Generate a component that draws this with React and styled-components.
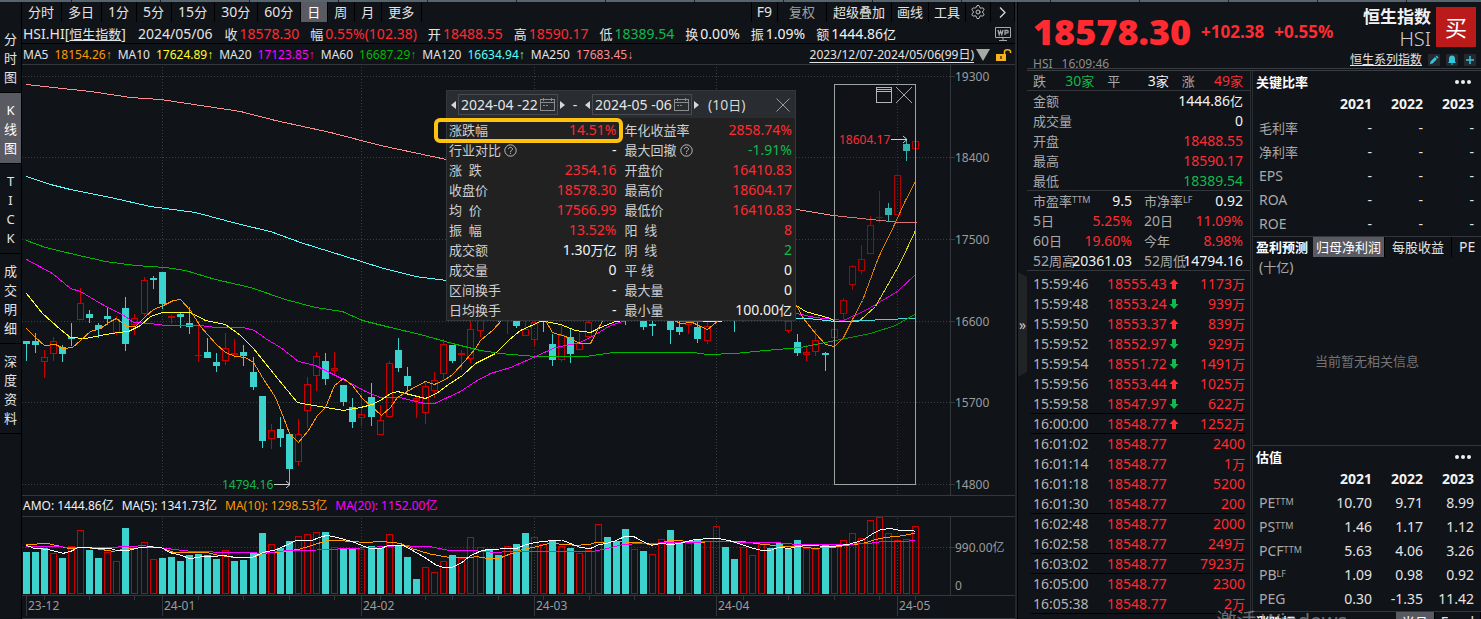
import React from 'react'
import styled, { css, createGlobalStyle } from 'styled-components'
import { Settings } from 'lucide-react'

const colors = {
  bg: '#101318',
  line: '#33363a',
  black: '#000',
  text: '#e4e4e4',
  muted: '#a9a9a9',
  up: '#ff2b31',
  down: '#12b84d',
  active: '#5a5a63',
  teal: '#3cd3cf',
  candle: '#cc0000',
}
const tones = {
  up: colors.up,
  down: colors.down,
  plain: '#f2f2f2',
}

const GlobalStyle = createGlobalStyle`
  * { box-sizing: border-box; }
  body {
    margin: 0;
    overflow: hidden;
    background: ${colors.bg};
    color: ${colors.text};
    font: 14px/20px "Noto Sans", "Noto Sans CJK SC", sans-serif;
  }
  button, input {
    margin: 0;
    padding: 0;
    border: 0;
    background: none;
    color: inherit;
    font: inherit;
  }
  table { border-collapse: collapse; border-spacing: 0; }
  th, td { padding: 0; font-weight: 400; text-align: left; }
  dl, dd, dt { margin: 0; }
  a { color: inherit; }
`

// chinese runs are set one size smaller than the digits beside them
const Cjk = styled.span`
  font-size: 13px;
`
const Mixed = ({ children }) =>
  children.split(/([\u4e00-\u9fff]+)/).filter(Boolean).map((part, i) => (
    /[\u4e00-\u9fff]/.test(part) ? <Cjk key={i}>{part}</Cjk> : <React.Fragment key={i}>{part}</React.Fragment>
  ))

/* ---------- shell ---------- */

const Page = styled.div`
  position: relative;
  display: flex;
  flex-direction: column;
  height: 100vh;
  overflow: hidden;
`
const TopStrip = styled.div`
  flex: none;
  height: 2px;
  background: repeating-linear-gradient(90deg, #56646d 0 88px, #1d2226 88px 89px) -17px 0;
`
const Body = styled.div`
  flex: 1;
  display: flex;
  min-height: 0;
`
const Rail = styled.nav`
  flex: none;
  width: 22px;
  padding-top: 20px;
  border-right: 1px solid ${colors.black};
`
const RailButton = styled.button`
  display: block;
  width: 100%;
  padding: 8px 0 5px;
  border-bottom: 1px solid ${colors.black};
  background: ${({ $active }) => ($active ? colors.active : 'none')};
  color: ${({ $active }) => ($active ? '#fff' : colors.text)};
  font-size: 13px;
  line-height: 19px;

  span { display: block; }
`
const Main = styled.main`
  flex: 1;
  min-width: 0;
  display: flex;
  flex-direction: column;
`

/* ---------- toolbar ---------- */

const Toolbar = styled.div`
  flex: none;
  display: flex;
  height: 20px;
`
const ToolButton = styled.button`
  display: flex;
  align-items: center;
  padding: 0 ${({ $pad = 6 }) => $pad}px;
  border-right: 1px solid ${colors.black};
  line-height: 20px;
  white-space: nowrap;
  color: ${({ $dim }) => ($dim ? '#a0a0a0' : colors.text)};
  ${({ $active }) => $active && css`
    background: ${colors.active};
    color: #fff;
  `}

  svg { flex: none; }
`
const Periods = styled.div`
  display: flex;

  ${ToolButton} { padding-right: 7px; }
`
const Tools = styled.div`
  display: flex;
  margin-left: auto;
  border-left: 1px solid ${colors.black};
`

/* ---------- info rows ---------- */

const QuoteRow = styled.div`
  flex: none;
  display: flex;
  align-items: center;
  gap: 12px;
  height: 22px;
  padding: 3px 3px 0 1px;
  border-bottom: 1px solid ${colors.black};
  white-space: nowrap;

  svg { margin-left: auto; }
`
const QuoteList = styled.dl`
  display: flex;
  gap: 11px;
`
const QuoteItem = styled.div`
  display: flex;
  align-items: center;
  gap: 2px;

  dt { font-size: 13px; }
  dd { color: ${({ $tone = 'plain' }) => tones[$tone]}; }
`
const SymbolLink = styled.a`
  text-decoration: none;

  span { text-decoration: underline; }
`
const MaRow = styled.div`
  flex: none;
  display: flex;
  align-items: center;
  gap: 6px;
  height: 21px;
  padding: 2px 3px 0 1px;
  border-bottom: 1px solid ${colors.line};
  font-size: 12px;
  white-space: nowrap;
`
const MaItem = styled.span`
  display: flex;
  gap: 6px;
  color: ${({ $color }) => $color};
  b { font-weight: 400; color: ${colors.text}; }
  i { font-style: normal; font-family: "Liberation Sans", sans-serif; }
`
const RangeButton = styled.button`
  display: flex;
  align-items: center;
  gap: 2px;
  margin-left: auto;
  span { text-decoration: underline; text-underline-offset: 3px; }
`
const AmoRow = styled.div`
  flex: none;
  display: flex;
  gap: 8px;
  height: 22px;
  padding-left: 1px;
  border-top: 1px solid ${colors.line};
  border-bottom: 1px solid ${colors.line};
  font-size: 12px;
  line-height: 20px;
  white-space: nowrap;
`
const AmoItem = styled.span`
  color: ${({ $color }) => $color};
`

/* ---------- charts ---------- */

const ChartBox = styled.section`
  position: relative;
  flex: none;
`
const Chart = styled.svg`
  display: block;
  width: 100%;
  height: auto;
  overflow: hidden;
  font: 12px "Noto Sans", "Noto Sans CJK SC", sans-serif;

  text { fill: #9a9c9e; }
`

// [high, body top, body bottom, low, rising] in thirds of a pixel, counted from y = 250
const candles = [
  [273, 273, 282, 333, 0], [249, 273, 285, 308, 0], [300, 321, 336, 384, 1], [261, 273, 312, 333, 1],
  [285, 291, 312, 336, 0], [219, 261, 267, 288, 0], [114, 159, 210, 210, 1], [180, 192, 204, 219, 0],
  [219, 225, 237, 264, 0], [171, 198, 207, 225, 0], [198, 207, 249, 255, 1], [141, 174, 282, 303, 0],
  [192, 204, 225, 255, 1], [81, 90, 192, 198, 1], [78, 84, 90, 117, 0], [66, 66, 162, 177, 0],
  [195, 198, 204, 222, 1], [189, 192, 201, 234, 0], [171, 219, 231, 252, 0], [213, 315, 318, 336, 1],
  [264, 306, 324, 324, 0], [309, 336, 348, 366, 0], [249, 294, 333, 345, 1], [267, 309, 315, 324, 1],
  [285, 306, 318, 348, 0], [321, 366, 411, 420, 0], [438, 438, 573, 594, 0], [522, 540, 567, 597, 1],
  [501, 537, 564, 591, 0], [549, 552, 657, 705, 0], [507, 552, 636, 648, 1], [381, 402, 483, 534, 1],
  [306, 318, 378, 423, 1], [309, 333, 387, 405, 0], [306, 354, 363, 378, 1], [405, 405, 456, 468, 0],
  [444, 471, 516, 534, 0], [429, 492, 503, 528, 1], [399, 441, 501, 528, 0], [465, 510, 555, 555, 1],
  [333, 339, 501, 501, 1], [264, 300, 354, 366, 0], [351, 378, 408, 423, 0], [435, 444, 453, 504, 1],
  [399, 408, 489, 522, 1], [366, 390, 423, 444, 1], [267, 282, 372, 387, 1], [285, 285, 333, 339, 0],
  [300, 309, 315, 360, 1], [198, 237, 327, 339, 1], [190, 200, 243, 261, 1], [120, 140, 180, 200, 0],
  [150, 160, 190, 216, 0], [150, 160, 190, 252, 1], [170, 180, 228, 234, 0], [198, 237, 258, 258, 1],
  [198, 216, 270, 288, 1], [180, 190, 216, 246, 0], [252, 282, 330, 348, 0], [228, 255, 330, 336, 1],
  [234, 261, 312, 339, 0], [249, 279, 300, 300, 1], [210, 216, 261, 261, 1], [150, 160, 190, 200, 1],
  [140, 150, 180, 190, 0], [140, 150, 180, 190, 0], [150, 160, 190, 224, 0], [150, 160, 190, 200, 1],
  [180, 190, 231, 240, 0], [204, 222, 228, 258, 0], [150, 160, 190, 200, 1], [180, 190, 240, 282, 0],
  [204, 231, 246, 255, 0], [198, 204, 225, 252, 1], [207, 231, 267, 279, 0], [213, 228, 273, 282, 1],
  [150, 160, 190, 200, 1], [150, 160, 190, 200, 0], [150, 160, 190, 246, 0], [150, 160, 190, 216, 1],
  [150, 160, 190, 200, 1], [150, 160, 190, 200, 0], [150, 160, 190, 200, 0], [150, 160, 190, 200, 0],
  [201, 213, 243, 249, 1], [252, 276, 309, 318, 0], [285, 306, 315, 333, 1], [237, 270, 306, 318, 1],
  [306, 309, 315, 363, 0], [237, 237, 264, 273, 1], [144, 150, 192, 207, 1], [45, 48, 105, 120, 1],
  [-15, 27, 63, 72, 1], [-102, -75, 12, 12, 1], [-177, -99, -96, -81, 1], [-141, -126, -105, -85, 0],
  [-228, -225, -105, -105, 1], [-330, -318, -297, -267, 0], [-327, -327, -303, -303, 1],
]

const averages = [
  ['#ff8c8c', '26,84 53,87 90,91 130,97 160,99 200,105 240,111 275,120 330,132 380,145 446,159 620,186 796,209 833,215 870,219 900,222 916,222'],
  ['#55ffff', '26,176 50,184 70,189 110,197 150,206 195,212 240,224 270,231 300,242 345,256 380,267 415,276 446,280 620,305 796,318 808,318 835,321 870,320 880,319 916,318'],
  ['#00b800', '26,240 45,247 70,253 105,261 135,265 165,267 185,270 215,279 250,287 285,299 315,307 342,311 362,320 390,327 420,334 452,343 480,350 500,353 535,356 585,356 613,352 693,352 707,354 735,353 765,350 800,347 835,340 870,333 895,325 916,313'],
  ['#ff00ff', '26,259 52,273 70,288 80,291 100,303 125,316 133,322 150,323 165,325 200,325 215,327 243,327 254,330 265,338 280,347 298,361 315,365 345,380 365,391 380,397 400,397 415,401 425,403 434,403 460,391 475,381 490,373 510,367 533,357 555,347 565,345 577,343 590,337 610,325 622,321 640,317 685,321 713,321 760,300 796,313 815,317 843,320 865,310 880,301 897,291 915,274'],
  ['#ffff20', '26,293 42,313 60,329 70,337 85,338 100,335 117,332 128,331 140,325 150,316 162,312 190,312 205,320 225,324 240,335 253,348 265,363 282,384 297,402 307,404 325,407 343,410 360,407 372,404 383,398 390,393 397,391 413,395 425,398 436,393 448,384 462,375 475,363 495,353 508,340 520,330 540,321 545,321 560,324 575,330 590,332 600,327 615,321 640,318 715,321 728,320 760,290 796,305 805,311 830,318 835,321 858,321 865,315 875,306 887,285 900,262 915,230'],
  ['#ff9900', '26,328 35,337 44,345 55,344 63,348 72,347 80,340 90,331 100,328 110,321 116,318 126,326 135,326 145,316 153,309 163,305 173,300 180,299 190,310 200,326 215,343 225,352 235,356 245,357 253,362 262,377 275,397 283,417 289,433 298,442 308,430 317,415 325,407 334,385 343,378 352,385 362,398 372,407 381,415 390,407 397,397 410,389 425,381 434,384 445,379 452,374 465,360 475,348 480,340 492,330 502,319 515,300 533,320 545,320 552,332 565,336 580,343 590,343 600,324 605,316 640,290 670,318 680,323 692,322 700,326 707,329 718,320 760,280 796,305 803,318 815,333 825,344 834,346 843,337 852,319 862,300 878,257 895,222 905,200 915,181'],
]

// [bar top, rising] in thirds of a pixel, counted from y = 490
const volumes = [
  [186, 0], [186, 0], [174, 0], [189, 1], [204, 0], [168, 1], [120, 1], [180, 0], [204, 0], [186, 1],
  [213, 1], [114, 0], [174, 1], [156, 1], [207, 1], [204, 0], [201, 0], [213, 0], [195, 0], [192, 0],
  [195, 0], [207, 0], [180, 1], [213, 0], [210, 0], [189, 0], [129, 0], [162, 1], [174, 0], [153, 0],
  [138, 1], [132, 1], [126, 1], [126, 0], [171, 1], [174, 0], [177, 0], [177, 1], [168, 0], [174, 0],
  [132, 1], [168, 0], [201, 0], [267, 0], [231, 1], [246, 1], [213, 1], [195, 0], [204, 1], [141, 1],
  [171, 1], [177, 0], [195, 0], [168, 1], [162, 0], [129, 0], [141, 1], [162, 1], [150, 0], [168, 1],
  [174, 0], [189, 1], [180, 1], [102, 1], [141, 0], [153, 0], [117, 0], [177, 1], [183, 0], [192, 1],
  [147, 1], [120, 0], [156, 0], [159, 1], [147, 0], [153, 1], [108, 1], [171, 0], [207, 0], [171, 1],
  [195, 1], [162, 1], [174, 0], [159, 0], [177, 0], [150, 0], [174, 1], [177, 1], [165, 0], [165, 1],
  [150, 1], [129, 1], [144, 1], [90, 1], [81, 1], [129, 1], [150, 1], [147, 1], [108, 1],
]

const volumeAverages = [
  ['#ff9900', '79,163 145,161 190,171 215,177 240,171 280,175 340,184 370,178 425,173 487,174 520,187 620,187 650,195 700,202 760,202 790,190 850,185 900,177 940,165 980,152 1020,152 1090,157 1150,155 1200,160 1240,177 1290,192 1340,201 1400,204 1430,200 1460,205 1500,204 1530,192 1570,178 1610,170 1650,160 1730,166 1770,163 1790,157 1840,155 1915,157 1950,164 1980,160 2010,151 2050,153 2100,157 2150,154 2230,155 2280,162 2360,170 2400,170 2440,175 2500,172 2540,166 2590,160 2630,148 2660,142 2700,138 2745,130'],
  ['#ff00ff', '79,169 190,171 330,172 380,170 430,167 487,174 580,185 750,188 790,190 850,183 950,180 1080,174 1200,167 1290,170 1340,180 1400,180 1480,187 1560,184 1780,184 1810,178 1870,163 1950,160 2030,157 2180,155 2260,159 2320,157 2400,164 2540,163 2610,160 2650,154 2700,156 2745,151'],
  ['#ffffff', '79,166 100,174 130,177 150,180 190,190 215,183 235,172 260,172 285,175 325,174 345,180 385,181 415,174 450,170 487,174 510,188 540,195 570,206 600,201 640,200 670,196 700,201 760,201 790,187 830,179 860,165 890,151 930,153 955,144 980,136 1010,142 1060,156 1090,168 1110,175 1145,175 1165,166 1210,166 1230,177 1270,200 1310,226 1330,232 1358,232 1385,218 1410,198 1440,184 1465,178 1500,177 1550,175 1575,165 1600,159 1630,154 1685,150 1710,160 1740,172 1770,176 1795,165 1820,160 1845,153 1875,139 1900,139 1930,155 1955,166 1985,160 2010,164 2040,160 2070,152 2090,148 2150,145 2185,151 2220,162 2260,175 2285,181 2315,180 2340,171 2365,176 2390,170 2415,167 2500,169 2550,162 2590,150 2620,130 2640,120 2670,115 2700,121 2735,121 2745,124'],
]

const months = [[26, '23-12'], [162, '24-01'], [361, '24-02'], [534, '24-03'], [716, '24-04'], [897, '24-05']]
const minorTicks = [44, 89, 134, 198, 243, 289, 334, 380, 425, 452, 498, 543, 589, 634, 679, 743, 788, 834, 879, 915]
const prices = [[76, 19300], [157, 18400], [239, 17500], [321, 16600], [402, 15700], [484, 14800]]

const slotX = i => Math.floor(26.02 + 9.08 * i)
const fromThirds = base => v => Math.round(base + v / 3)

const Candle = ({ index, data: [high, top, bottom, low, rising] }) => {
  const x = slotX(index)
  const [h, t, b, l] = [high, top, bottom, low].map(fromThirds(250))
  if (!rising) {
    return <path fill={colors.teal} d={`M${x} ${h}h1V${l}h-1zM${x - 3} ${t}h7V${b}h-7z`} />
  }
  const hollow = b - t >= 3 ? `M${x - 2} ${t + 1}V${b - 1}h5V${t + 1}z` : ''
  return (
    <g fill={colors.candle}>
      <path d={`M${x} ${h}h1V${t}h-1zM${x} ${b}h1V${l}h-1z`} />
      <path fillRule="evenodd" d={`M${x - 3} ${t}h7V${b}h-7z${hollow}`} />
    </g>
  )
}

const PriceChart = () => (
  <Chart viewBox="22 65 993 430" role="img" aria-label="K线图">
    <g shapeRendering="crispEdges">
      <g stroke="#3b3f43" strokeDasharray="1 2" fill="none">
        {prices.map(([y]) => <path key={y} d={`M22 ${y + 0.5}H950`} />)}
        {months.slice(1).map(([x]) => <path key={x} d={`M${x + 0.5} 67V495`} />)}
      </g>
      <path d="M950.5 65V495" stroke={colors.line} />
      {prices.map(([y]) => <path key={y} d={`M950 ${y + 0.5}h5`} stroke={colors.line} />)}
      {candles.map((data, i) => <Candle key={i} index={i} data={data} />)}
      {averages.map(([color, points]) => (
        <polyline key={color} points={points} transform="translate(0.5 0.5)" fill="none" stroke={color} />
      ))}
      <rect x="834" y="84" width="82" height="401" fill="#101318" opacity="0.18" />
      <rect x="834.5" y="84.5" width="81" height="400" fill="none" stroke="#9da39f" />
      <path d="M876.5 87.5h15v15h-15zM877 91.500h15M877 89.500h14" fill="none" stroke="#b4b4b4" />
    </g>
    <path d="M896 87l16 16M912 87l-16 16" stroke="#a8a8a8" />
    <path d="M891 139.500h16M903 136l4 3.500l-4 3.500M274 484.500h16M286 481l4 3.500l-4 3.500" fill="none" stroke="#d0d0d0" />
    <text x="839" y="144" style={{ fill: colors.up }}>18604.17</text>
    <text x="222" y="489" style={{ fill: colors.down }}>14794.16</text>
    {prices.map(([y, label]) => <text key={y} x="955" y={y + 5}>{label}</text>)}
  </Chart>
)

const VolumeBar = ({ index, data: [top, rising] }) => {
  const x = slotX(index)
  const t = fromThirds(490)(top)
  return rising
    ? <rect x={x - 2.5} y={t + 0.5} width="6" height={593 - t} fill="none" stroke={colors.candle} />
    : <rect x={x - 3} y={t} width="7" height={594 - t} fill={colors.teal} />
}

const toPixels = points => points.split(' ').map(p => {
  const [x, y] = p.split(',').map(Number)
  return `${x / 3},${490 + y / 3}`
}).join(' ')

const VolumeChart = () => (
  <Chart viewBox="22 517 993 102" role="img" aria-label="成交额">
    <g shapeRendering="crispEdges" fill="none">
      <g stroke="#3b3f43" strokeDasharray="1 2">
        <path d="M22 547.500H950" />
        {months.slice(1).map(([x]) => <path key={x} d={`M${x + 0.5} 518V595`} />)}
      </g>
      {volumes.map((data, i) => <VolumeBar key={i} index={i} data={data} />)}
      {volumeAverages.map(([color, points]) => (
        <polyline key={color} points={toPixels(points)} stroke={color} />
      ))}
      <g stroke={colors.line}>
        <path d="M950.500 517V595M950 547.500h5M22 595.500H1015M22 618.500H1015" />
        {months.map(([x]) => <path key={x} d={`M${x + 0.5} 596V616`} />)}
        {minorTicks.map(x => <path key={x} d={`M${x + 0.5} 596v4`} />)}
      </g>
    </g>
    {months.map(([x, label]) => <text key={x} x={x + 2} y="610">{label}</text>)}
    <text x="955" y="552">990.00亿</text>
    <text x="955" y="590">0</text>
  </Chart>
)

/* ---------- range statistics popup ---------- */

const Popup = styled.div`
  position: absolute;
  left: 424px;
  top: 25px;
  width: 350px;
  border: 1px solid #34373b;
  background: #212121;
`
const PopupHeader = styled.div`
  display: flex;
  align-items: center;
  height: 27px;
  padding: 0 5px 0 2px;
  background: #292c30;
`
const StepButton = styled.button`
  flex: none;
  display: flex;
  justify-content: center;
  width: 9px;
`
const DateField = styled.label`
  flex: none;
  display: flex;
  align-items: center;
  width: 100px;
  height: 21px;
  padding: 0 2px;
  border: 1px solid #484b50;

  input { width: 79px; height: 19px; }
  svg { flex: none; }
`
const Dash = styled.span`
  width: 16px;
  text-align: center;
`
const Days = styled.span`
  margin-left: 7px;
  color: #d6d6d6;
`
const CloseButton = styled.button`
  display: flex;
  margin-left: auto;
`
const StatGrid = styled.dl`
  display: grid;
  grid-template-columns: 1fr 1fr;
  column-gap: 8px;
  padding: 2px 3px 0 2px;
`
const Stat = styled.div`
  display: flex;
  align-items: center;
  justify-content: space-between;
  height: 20px;

  dt {
    display: flex;
    align-items: center;
    gap: 3px;
    font-size: 13px;
    color: #cfcfcf;
    white-space: pre;
  }
  dd { color: ${({ $tone = 'plain' }) => tones[$tone]}; }
`
const Highlight = styled.div`
  position: absolute;
  left: -13px;
  top: 27px;
  width: 189px;
  height: 25px;
  border: 4px solid #ffc20e;
  border-radius: 6px;
  pointer-events: none;
`

const Calendar = () => (
  <svg width="15" height="15" viewBox="0 0 15 15" fill="none" stroke="#8c8c8c" shapeRendering="crispEdges">
    <path d="M0.500 2.500h14v11h-14zM0.500 5.500h14M3.500 0.500v3M11.500 0.500v3" />
    <path d="M3 8.500h2M6 8.500h2" />
  </svg>
)
const Help = () => (
  <svg width="13" height="13" viewBox="0 0 13 13" fill="none" stroke="#bdbdbd">
    <circle cx="6.500" cy="6.500" r="5.700" />
    <path d="M4.500 5.200c0-1.200.9-1.900 2-1.900s2 .7 2 1.700c0 1.400-2 1.400-2 2.900M6.500 8.800v1.100" />
  </svg>
)
const Triangle = ({ left }) => (
  <svg width="5" height="8" viewBox="0 0 5 8" fill="#d8d8d8">
    <path d={left ? 'M5 0v8L0 4z' : 'M0 0v8l5-4z'} />
  </svg>
)

const stats = [
  ['涨跌幅', '14.51%', 'up'], ['年化收益率', '2858.74%', 'up'],
  ['行业对比', '-', 'plain', true], ['最大回撤', '-1.91%', 'down', true],
  ['涨  跌', '2354.16', 'up'], ['开盘价', '16410.83', 'up'],
  ['收盘价', '18578.30', 'up'], ['最高价', '18604.17', 'up'],
  ['均  价', '17566.99', 'up'], ['最低价', '16410.83', 'up'],
  ['振  幅', '13.52%', 'up'], ['阳  线', '8', 'up'],
  ['成交额', '1.30万亿'], ['阴  线', '2', 'down'],
  ['成交量', '0'], ['平 线', '0'],
  ['区间换手', '-'], ['最大量', '0'],
  ['日均换手', '-'], ['最小量', '100.00亿'],
]

const RangePopup = () => (
  <Popup>
    <PopupHeader>
      <StepButton aria-label="开始日期前移"><Triangle left /></StepButton>
      <DateField><input aria-label="开始日期" defaultValue="2024-04 -22" /><Calendar /></DateField>
      <StepButton aria-label="开始日期后移"><Triangle /></StepButton>
      <Dash>-</Dash>
      <StepButton aria-label="结束日期前移"><Triangle left /></StepButton>
      <DateField><input aria-label="结束日期" defaultValue="2024-05 -06" /><Calendar /></DateField>
      <StepButton aria-label="结束日期后移"><Triangle /></StepButton>
      <Days><Mixed>(10日)</Mixed></Days>
      <CloseButton aria-label="关闭">
        <svg width="14" height="14" viewBox="0 0 14 14" stroke="#9a9a9a"><path d="M0.500 0.500l13 13M13.500 0.500l-13 13" /></svg>
      </CloseButton>
    </PopupHeader>
    <StatGrid>
      {stats.map(([label, value, tone, help]) => (
        <Stat key={label} $tone={tone}>
          <dt>{label}{help && <Help />}</dt>
          <dd><Mixed>{value}</Mixed></dd>
        </Stat>
      ))}
    </StatGrid>
    <Highlight />
  </Popup>
)

/* ---------- right panel ---------- */

const Side = styled.aside`
  flex: none;
  display: flex;
  width: 466px;
  border-left: 2px solid #24272b;
`
const Gutter = styled.div`
  flex: none;
  width: 10px;
  border-left: 1px solid ${colors.black};
  padding-top: 270px;
`
const ExpandButton = styled.button`
  display: block;
  width: 9px;
  height: 105px;
  background: #222324;
  clip-path: polygon(0 0, 100% 5px, 100% 100px, 0 100%);
  font-size: 14px;
  line-height: 96px;
  color: #c8c8c8;
`
const SideBody = styled.div`
  flex: 1;
  min-width: 0;
  display: flex;
  flex-direction: column;
`
const SideHeader = styled.header`
  flex: none;
  display: flex;
  justify-content: space-between;
  height: 69px;
  padding: 5px 5px 0 6px;
  border-bottom: 3px double #3a3d41;
`
const PriceLine = styled.div`
  display: flex;
  align-items: center;
  gap: 10px;
  height: 48px;
  padding-top: 2px;
  color: ${colors.up};
  font-weight: 700;
  font-size: 17px;
  white-space: nowrap;
`
const Price = styled.strong`
  font-size: 36px;
`
const Updated = styled.div`
  display: flex;
  gap: 9px;
  font-size: 12px;
  line-height: 18px;
  color: #8d8d8d;
`
const NameBlock = styled.div`
  display: flex;
  flex-direction: column;
  align-items: flex-end;
`
const NameRow = styled.div`
  display: flex;
  gap: 5px;
  height: 47px;
  text-align: right;
  white-space: nowrap;
`
const Name = styled.h1`
  margin: 0;
  font-size: 17px;
  font-weight: 700;
  line-height: 20px;
  color: #f2f2f2;

  small {
    display: block;
    font-size: 20px;
    font-weight: 300;
    line-height: 24px;
    color: #cfcfcf;
  }
`
const BuyButton = styled.button`
  width: 40px;
  height: 40px;
  background: #bb1a1a;
  color: #fff;
  font-size: 22px;
`
const SeriesRow = styled.div`
  display: flex;
  align-items: center;
  gap: 6px;
  height: 18px;
  font-size: 12px;
`
const IconButton = styled.button`
  display: flex;
  width: 12px;
  height: 12px;
  background: #25282d;
`
const Columns = styled.div`
  flex: 1;
  display: flex;
  min-height: 0;
`
const Quotes = styled.section`
  flex: none;
  width: 223px;
`
const Block = styled.dl`
  display: grid;
  grid-template-columns: repeat(${({ $cols = 1 }) => $cols}, minmax(0, 1fr));
  column-gap: ${({ $gap = 0 }) => $gap}px;
  padding: 0 7px 0 6px;
  box-shadow: inset 0 -1px ${colors.line};
`
const Pair = styled.div`
  display: flex;
  height: 20px;
  white-space: nowrap;

  dt { flex: 1 1 0; min-width: 0; color: ${colors.muted}; }
  dd { color: ${({ $tone = 'plain' }) => tones[$tone]}; }
  sup { font-size: 9px; line-height: 0; vertical-align: 3px; }
`
const Ticks = styled.table`
  width: 214px;
  margin: 3px 0 0 4px;
  table-layout: fixed;
`
const TickRow = styled.tr`
  height: 20px;
  color: ${colors.up};
  ${({ $rule }) => $rule && css`box-shadow: inset 0 -1px ${colors.black};`}

  th { width: 76px; padding-left: 2px; color: #b4b4b4; }
  td { line-height: 20px; }
  td:nth-child(2) { width: 60px; }
  td:nth-child(3) { width: 14px; }
  td:last-child { text-align: right; }
  svg { display: block; margin: 0 auto; }
`
const Finance = styled.section`
  flex: 1;
  min-width: 0;
  display: flex;
  flex-direction: column;
  border-left: 3px double #2a2d31;
`
const Titled = styled.div`
  flex: none;
  display: flex;
  align-items: center;
  justify-content: space-between;
  height: 21px;
  padding: 0 10px 0 3px;
`
const Title = styled.h2`
  flex: none;
  margin: 0;
  font-size: 13px;
  font-weight: 700;
  color: #fff;
`
const Ratios = styled.table`
  flex: none;
  width: 100%;
  table-layout: fixed;

  tr { height: 24px; }
  th, td { text-align: right; width: 51px; }
  th:first-child { width: auto; padding-left: 6px; text-align: left; color: ${colors.muted}; }
  thead th { font-weight: 700; color: #f2f2f2; }
  th:last-child, td:last-child { width: 58px; padding-right: 7px; }
  sup { font-size: 9px; line-height: 0; vertical-align: 3px; }
`
const Tabs = styled.div`
  flex: none;
  display: flex;
  align-items: center;
  height: 21px;
  padding-left: 3px;
  border-top: 1px solid ${colors.line};
  overflow: hidden;
`
const Tab = styled.button`
  flex: none;
  height: 20px;
  padding: 0 7px;
  border-right: 1px solid ${colors.black};
  font-size: ${({ $latin }) => ($latin ? 14 : 13)}px;
  ${({ $active }) => $active && css`
    margin-left: 5px;
    padding: 0 3px;
    background: ${colors.active};
    color: #fff;
  `}
`
const TabGroup = styled.div`
  display: flex;
  margin-left: auto;

  ${Tab} { padding: 0 6px; }
`
const Unit = styled.div`
  flex: none;
  padding-left: 6px;
  color: ${colors.muted};
`
const Empty = styled.div`
  flex: none;
  display: flex;
  align-items: center;
  justify-content: center;
  height: 169px;
  color: #747474;
  font-size: 13px;
  border-bottom: 1px solid ${colors.line};
`
const Watermark = styled.div`
  position: absolute;
  right: 134px;
  bottom: -18px;
  font-size: 20px;
  line-height: 32px;
  color: rgba(190, 190, 190, 0.55);
  pointer-events: none;
`

const TickArrow = ({ dir }) => (
  <svg width="10" height="10" viewBox="0 0 10 10" fill={tones[dir]}>
    <path d={dir === 'up' ? 'M5 0l4.500 5H7v5H3V5H0.500z' : 'M5 10l4.500-5H7V0H3v5H0.500z'} />
  </svg>
)
const More = () => (
  <svg width="16" height="4" viewBox="0 0 16 4" fill="#f0f0f0">
    <circle cx="2" cy="2" r="2" /><circle cx="8" cy="2" r="2" /><circle cx="14" cy="2" r="2" />
  </svg>
)

const ticks = [
  ['15:59:46', '18555.43', 'up', '1173万'],
  ['15:59:48', '18553.24', 'down', '939万'],
  ['15:59:50', '18553.37', 'up', '839万'],
  ['15:59:52', '18552.97', 'down', '929万'],
  ['15:59:54', '18551.72', 'down', '1491万'],
  ['15:59:56', '18553.44', 'up', '1025万'],
  ['15:59:58', '18547.97', 'down', '622万', true],
  ['16:00:00', '18548.77', 'up', '1252万', true],
  ['16:01:02', '18548.77', '', '2400'],
  ['16:01:14', '18548.77', '', '1万'],
  ['16:01:18', '18548.77', '', '5200'],
  ['16:01:30', '18548.77', '', '200', true],
  ['16:02:48', '18548.77', '', '2000'],
  ['16:02:58', '18548.77', '', '249万', true],
  ['16:03:02', '18548.77', '', '7923万', true],
  ['16:05:00', '18548.77', '', '2300'],
  ['16:05:38', '18548.77', '', '2万', true],
]

const breadth = [['跌', '30家', 'down'], ['平', '3家'], ['涨', '49家', 'up']]
const today = [
  ['金额', '1444.86亿'], ['成交量', '0'], ['开盘', '18488.55', 'up'],
  ['最高', '18590.17', 'up'], ['最低', '18389.54', 'down'],
]
const metrics = [
  ['市盈率', '9.5', 'plain', 'TTM'], ['市净率', '0.92', 'plain', 'LF'],
  ['5日', '5.25%', 'up'], ['20日', '11.09%', 'up'],
  ['60日', '19.60%', 'up'], ['今年', '8.98%', 'up'],
  ['52周高', '20361.03'], ['52周低', '14794.16'],
]

const PairBlock = ({ rows, cols, gap }) => (
  <Block $cols={cols} $gap={gap}>
    {rows.map(([label, value, tone, sup]) => (
      <Pair key={label} $tone={tone}>
        <dt><Mixed>{label}</Mixed>{sup && <sup>{sup}</sup>}</dt>
        <dd><Mixed>{value}</Mixed></dd>
      </Pair>
    ))}
  </Block>
)

const years = ['2021', '2022', '2023']
const RatioTable = ({ rows }) => (
  <Ratios>
    <thead>
      <tr><th />{years.map(y => <th key={y} scope="col">{y}</th>)}</tr>
    </thead>
    <tbody>
      {rows.map(([label, sup, ...values]) => (
        <tr key={label}>
          <th scope="row"><Mixed>{label}</Mixed>{sup && <sup>{sup}</sup>}</th>
          {values.map((v, i) => <td key={i}>{v}</td>)}
        </tr>
      ))}
    </tbody>
  </Ratios>
)

const keyRatios = ['毛利率', '净利率', 'EPS', 'ROA', 'ROE'].map(l => [l, '', '-', '-', '-'])
const valuation = [
  ['PE', 'TTM', '10.70', '9.71', '8.99'],
  ['PS', 'TTM', '1.46', '1.17', '1.12'],
  ['PCF', 'TTM', '5.63', '4.06', '3.26'],
  ['PB', 'LF', '1.09', '0.98', '0.92'],
  ['PEG', '', '0.30', '-1.35', '11.42'],
]

const SidePanel = () => (
  <Side>
    <Gutter><ExpandButton aria-label="展开">»</ExpandButton></Gutter>
    <SideBody>
      <SideHeader>
        <div>
          <PriceLine>
            <Price>18578.30</Price>
            <span>+102.38</span>
            <span>+0.55%</span>
          </PriceLine>
          <Updated><span>HSI</span><time>16:09:46</time></Updated>
        </div>
        <NameBlock>
          <NameRow>
            <Name>恒生指数<small>HSI</small></Name>
            <BuyButton>买</BuyButton>
          </NameRow>
          <SeriesRow>
            <a href="#series">恒生系列指数</a>
            <IconButton aria-label="编辑">
              <svg width="12" height="12" viewBox="0 0 12 12" fill="#35c5dc"><path d="M2 10l.5-2.500L7 3l2 2-4.500 4.500zM7.600 2.400L8.600 1.400l2 2-1 1z" /></svg>
            </IconButton>
            <IconButton aria-label="提醒">
              <svg width="12" height="12" viewBox="0 0 12 12" fill="#35c5dc"><path d="M6 1.500c2 0 3 1.500 3 3.500v2.500L10 9H2l1-1.500V5c0-2 1-3.500 3-3.500zM5 9.500h2v1H5z" /></svg>
            </IconButton>
            <IconButton aria-label="添加">
              <svg width="12" height="12" viewBox="0 0 12 12" stroke="#35c5dc" strokeWidth="1.500"><path d="M6 2v8M2 6h8" /></svg>
            </IconButton>
          </SeriesRow>
        </NameBlock>
      </SideHeader>
      <Columns>
        <Quotes>
          <PairBlock rows={breadth} cols={3} gap={13} />
          <PairBlock rows={today} />
          <PairBlock rows={metrics} cols={2} gap={12} />
          <Ticks>
            <tbody>
              {ticks.map(([time, price, dir, volume, rule]) => (
                <TickRow key={time} $rule={rule}>
                  <th scope="row">{time}</th>
                  <td>{price}</td>
                  <td>{dir && <TickArrow dir={dir} />}</td>
                  <td><Mixed>{volume}</Mixed></td>
                </TickRow>
              ))}
            </tbody>
          </Ticks>
        </Quotes>
        <Finance>
          <Titled><Title>关键比率</Title><More /></Titled>
          <RatioTable rows={keyRatios} />
          <Tabs>
            <Title>盈利预测</Title>
            <Tab $active>归母净利润</Tab>
            <Tab>每股收益</Tab>
            <Tab $latin>PE</Tab>
          </Tabs>
          <Unit><Mixed>(十亿)</Mixed></Unit>
          <Empty>当前暂无相关信息</Empty>
          <Titled><Title>估值</Title><More /></Titled>
          <RatioTable rows={valuation} />
          <Tabs>
            <Title>涨跌幅</Title>
            <TabGroup>
              <Tab $active>当月</Tab>
              <Tab $latin>Excel</Tab>
            </TabGroup>
          </Tabs>
        </Finance>
      </Columns>
    </SideBody>
  </Side>
)

/* ---------- app ---------- */

const rail = ['分时图', 'K线图', 'TICK', '成交明细', '深度资料']
const periods = ['分时', '多日', '1分', '5分', '15分', '30分', '60分', '日', '周', '月', '更多']
const quote = [
  ['收', '18578.30', 'up'], ['幅', '0.55%(102.38)', 'up'], ['开', '18488.55', 'up'],
  ['高', '18590.17', 'up'], ['低', '18389.54', 'down'], ['换', '0.00%'], ['振', '1.09%'],
  ['额', '1444.86亿'],
]
const maLegend = [
  ['MA5', '18154.26', '↑', '#ff9900'], ['MA10', '17624.89', '↑', '#ffff20'],
  ['MA20', '17123.85', '↑', '#ff00ff'], ['MA60', '16687.29', '↑', '#00b800'],
  ['MA120', '16634.94', '↑', '#55ffff'], ['MA250', '17683.45', '↓', '#ff8c8c'],
]

const App = () => (
  <Page>
    <GlobalStyle />
    <TopStrip />
    <Body>
      <Rail>
        {rail.map(label => (
          <RailButton key={label} $active={label === 'K线图'}>
            {[...label].map((c, i) => <span key={i}>{c}</span>)}
          </RailButton>
        ))}
      </Rail>
      <Main>
        <Toolbar>
          <Periods>
            {periods.map(p => <ToolButton key={p} $active={p === '日'}><span><Mixed>{p}</Mixed></span></ToolButton>)}
          </Periods>
          <Tools>
            <ToolButton $pad={5}>F9</ToolButton>
            <ToolButton $pad={11} $dim><Mixed>复权</Mixed></ToolButton>
            <ToolButton><Mixed>超级叠加</Mixed></ToolButton>
            <ToolButton $pad={5}><Mixed>画线</Mixed></ToolButton>
            <ToolButton $pad={5}><Mixed>工具</Mixed></ToolButton>
            <ToolButton $pad={4} aria-label="设置">
              <Settings size={16} strokeWidth={1.5} color="#c4c4c4" />
            </ToolButton>
            <ToolButton $pad={8} aria-label="展开工具栏">
              <svg width="7" height="11" viewBox="0 0 7 11" fill="none" stroke="#d8d8d8" strokeWidth="1.300"><path d="M1 0.500l5 5-5 5" /></svg>
            </ToolButton>
          </Tools>
        </Toolbar>
        <QuoteRow>
          <SymbolLink href="#hsi">HSI.HI[<Cjk>恒生指数</Cjk>]</SymbolLink>
          <time>2024/05/06</time>
          <QuoteList>
            {quote.map(([label, value, tone]) => (
              <QuoteItem key={label} $tone={tone}><dt>{label}</dt><dd><Mixed>{value}</Mixed></dd></QuoteItem>
            ))}
          </QuoteList>
          <svg width="17" height="16" viewBox="0 0 17 16" fill="none" stroke="#a8a8a8">
            <path d="M0.500 1.500h15v10h-15zM8 12v2.500M4 14.500h8" />
            <path d="M3 4l1.200 4.500L5.500 5l1.300 3.500L8 4M10 9V4.500h2.200q1 0 1 1.200t-1 1.200H10" strokeWidth="1.300" />
          </svg>
        </QuoteRow>
        <MaRow>
          {maLegend.map(([name, value, arrow, color]) => (
            <MaItem key={name} $color={color}><b>{name}</b><span>{value}<i>{arrow}</i></span></MaItem>
          ))}
          <RangeButton>
            <span>2023/12/07-2024/05/06(99日)</span>
            <svg width="14" height="12" viewBox="0 0 14 12" fill="#a8a8a8"><path d="M0 0h14L7 12z" /></svg>
          </RangeButton>
          <svg width="16" height="14" viewBox="0 0 16 14" fill="#f8b31c">
            <path d="M0 6h10v7H0zM4.400 8v3h1.200V8z" fillRule="evenodd" />
            <path d="M8.500 6V3.500C8.500 1 14.500 1 14.500 3.500V5" fill="none" stroke="#f8b31c" strokeWidth="1.500" />
          </svg>
        </MaRow>
        <ChartBox>
          <PriceChart />
          <RangePopup />
        </ChartBox>
        <AmoRow>
          <AmoItem $color="#f2f2f2">AMO: 1444.86亿</AmoItem>
          <AmoItem $color="#f2f2f2">MA(5): 1341.73亿</AmoItem>
          <AmoItem $color="#ff9900">MA(10): 1298.53亿</AmoItem>
          <AmoItem $color="#ff00ff">MA(20): 1152.00亿</AmoItem>
        </AmoRow>
        <ChartBox><VolumeChart /></ChartBox>
      </Main>
      <SidePanel />
    </Body>
    <Watermark>激活 Windows</Watermark>
  </Page>
)

export default App
